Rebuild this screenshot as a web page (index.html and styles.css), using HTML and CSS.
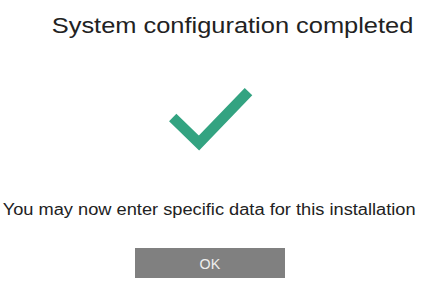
FILE: index.html
```html
<!DOCTYPE html>
<html lang="en">

<head>
    <meta charset="UTF-8">
    <meta name="viewport" content="width=device-width, initial-scale=1.0">
    <title>System configuration completed</title>
    <link rel="stylesheet" href="styles.css">
</head>

<body>
    <div class="dialog">
        <h1 class="title">System configuration completed</h1>

        <svg class="check" viewBox="0 0 90 70" width="90" height="70" aria-hidden="true">
            <polyline points="6.7,32.5 33,58 82.5,6.7" />
        </svg>

        <p class="message">You may now enter specific data for this installation</p>

        <button class="ok-button" type="button"><span>OK</span></button>
    </div>
</body>

</html>
```

FILE: styles.css
```css
:root {
    --text-color: #222;
    --check-color: #33a381;
    --button-color: #808080;
}

* {
    box-sizing: border-box;
    margin: 0;
    padding: 0;
}

body {
    font-family: 'Liberation Sans', Arial, sans-serif;
    color: var(--text-color);
    background-color: #fff;
}

.dialog {
    width: 419px;
    display: flex;
    flex-direction: column;
    align-items: center;
}

.title {
    margin-top: 13px;
    margin-left: 47px;
    font-size: 22px;
    line-height: 26px;
    font-weight: normal;
    white-space: nowrap;
    transform: scaleX(1.155);
}

.check {
    display: block;
    margin-top: 46px;
    margin-left: 3px;
}

.check polyline {
    fill: none;
    stroke: var(--check-color);
    stroke-width: 10.5;
    stroke-linejoin: miter;
    stroke-linecap: butt;
}

.message {
    margin-top: 46px;
    font-size: 16px;
    line-height: 18px;
    white-space: nowrap;
    transform: scaleX(1.14);
}

.ok-button {
    margin-top: 29px;
    width: 150px;
    height: 30px;
    border: none;
    background-color: var(--button-color);
    color: #eee;
    font-family: inherit;
    font-size: 15px;
}

.ok-button span {
    display: inline-block;
    transform: scaleX(0.95);
}
```
